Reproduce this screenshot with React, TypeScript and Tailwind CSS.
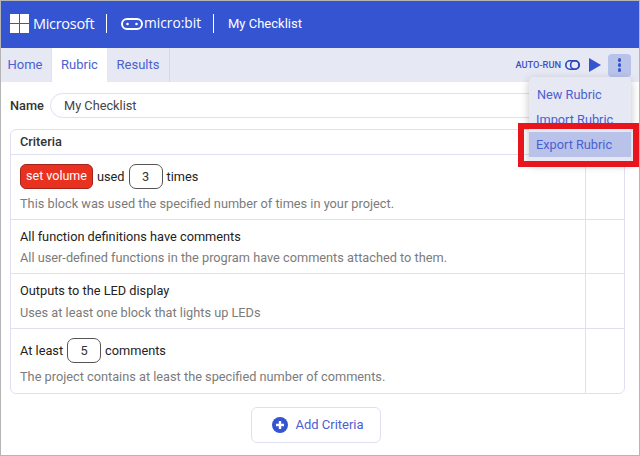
import React from "react";

function Row({ title, desc, h, titleClass, descClass }: { title: React.ReactNode; desc: string; h: string; titleClass?: string; descClass?: string }) {
  return (
    <div className={`flex border-t border-[#dfe1f3] ${h}`}>
      <div className="flex-1 min-w-0 pl-[9px] flex flex-col">
        <div className={`flex items-center text-[12.75px] text-[#222] ${titleClass ?? ""}`}>{title}</div>
        <div className={`text-[12.75px] leading-[18px] text-[#7b7b7b] ${descClass ?? ""}`}>{desc}</div>
      </div>
      <div className="w-[39px] border-l border-[#dfe1f3]" />
    </div>
  );
}

function NumBox({ n }: { n: string }) {
  return (
    <span className="mx-[4px] w-[34px] h-[25px] rounded-[7px] border border-[#555] bg-white flex items-center justify-center text-[12.75px] text-[#333]">{n}</span>
  );
}

export default function App() {
  return (
    <div className="relative w-[640px] h-[456px] overflow-hidden bg-white border border-[#b5b5b5] font-['Roboto',sans-serif]">
      <header className="h-[47px] bg-[#3454d1] flex items-center text-white pl-[9px] pb-[2px]">
        <svg width="19" height="19" viewBox="0 0 19 19" fill="#fff">
          <rect x="0" y="0" width="9" height="9" /><rect x="10" y="0" width="9" height="9" />
          <rect x="0" y="10" width="9" height="9" /><rect x="10" y="10" width="9" height="9" />
        </svg>
        <span className="ml-[4px] w-[61px] text-[14.5px] font-medium tracking-[-0.3px] font-['Open_Sans',sans-serif]">Microsoft</span>
        <div className="ml-[12px] w-px h-[19px] bg-white" />
        <svg className="ml-[14px]" width="22" height="12" viewBox="0 0 22 12" fill="none">
          <rect x="1" y="1" width="20" height="10" rx="5" stroke="#fff" strokeWidth="2" />
          <circle cx="6.5" cy="6" r="1.3" fill="#fff" /><circle cx="15.5" cy="6" r="1.3" fill="#fff" />
        </svg>
        <span className="ml-[1px] w-[57px] text-[13.75px] font-['Open_Sans',sans-serif]">micro:bit</span>
        <div className="ml-[12px] w-px h-[19px] bg-white" />
        <span className="ml-[14px] text-[13px]">My Checklist</span>
      </header>

      <nav className="h-[34px] bg-[#e6e8f3] flex items-stretch text-[13px] text-[#4b60d2]">
        <div className="w-[51px] pr-[2px] flex items-center justify-center border-r border-[#dfe1f3]">Home</div>
        <div className="w-[55px] bg-white flex items-center justify-center">Rubric</div>
        <div className="w-[63px] flex items-center justify-center border-r border-[#d5d8ec]">Results</div>
        <div className="ml-auto flex items-center pr-[8px]">
          <span className="text-[9.25px] font-medium text-[#3a50c4]">AUTO-RUN</span>
          <svg className="ml-[4px]" width="15" height="10" viewBox="0 0 15 10" fill="none" stroke="#2d45b8" strokeWidth="1.6">
            <rect x="0.8" y="0.8" width="13.4" height="8.4" rx="4.2" /><circle cx="9.8" cy="5" r="4.2" />
          </svg>
          <svg className="ml-[9px]" width="12" height="14" viewBox="0 0 12 14" fill="#3454d1"><path d="M0 0 L12 7 L0 14 Z" /></svg>
          <div className="ml-[7px] w-[23px] h-[23px] rounded-[4px] bg-[#b9c3ea] flex flex-col items-center justify-center gap-[1.5px]">
            <span className="w-[3.5px] h-[3.5px] rounded-full bg-[#3454d1]" />
            <span className="w-[3.5px] h-[3.5px] rounded-full bg-[#3454d1]" />
            <span className="w-[3.5px] h-[3.5px] rounded-full bg-[#3454d1]" />
          </div>
        </div>
      </nav>

      <main className="pl-[9px] pr-[14px]">
        <div className="flex items-center h-[47px]">
          <span className="text-[12.75px] font-medium text-[#333] w-[40px]">Name</span>
          <div className="flex-1 h-[25px] rounded-full border border-[#dfe1f3] flex items-center pl-[13px] text-[12.75px] text-[#444]">My Checklist</div>
        </div>
        <div className="rounded-[6px] border border-[#dfe1f3] h-[265px] overflow-hidden">
          <div className="flex h-[24px]">
            <div className="flex-1 pl-[9px] text-[12.75px] font-medium text-[#333] flex items-center">Criteria</div>
            <div className="w-[39px] border-l border-[#dfe1f3]" />
          </div>
          <Row h="h-[65px]" titleClass="mt-[9px]" descClass="mt-[6px]" title={<>
            <span className="h-[25px] w-[73px] rounded-[6px] bg-[#e8321f] border border-[#a3241a] text-white text-[12.5px] flex items-center justify-center mr-[4px]">set volume</span>
            <span>used</span><NumBox n="3" /><span>times</span></>}
            desc="This block was used the specified number of times in your project." />
          <Row h="h-[54px]" titleClass="mt-[8px] h-[18px]" descClass="mt-[3px]" title="All function definitions have comments"
            desc="All user-defined functions in the program have comments attached to them." />
          <Row h="h-[55px]" titleClass="mt-[8px] h-[18px]" descClass="mt-[4px]" title="Outputs to the LED display"
            desc="Uses at least one block that lights up LEDs" />
          <Row h="h-[66px]" titleClass="mt-[9px]" descClass="mt-[5px]" title={<>
            <span>At least</span><NumBox n="5" /><span>comments</span></>}
            desc="The project contains at least the specified number of comments." />
        </div>
        <div className="flex justify-center mt-[13px] pr-[4px]">
          <button className="w-[130px] h-[36px] pl-[5px] rounded-[6px] border border-[#dfe1f3] bg-white flex items-center justify-center text-[13px] text-[#4b60d2]">
            <svg width="16" height="16" viewBox="0 0 16 16">
              <circle cx="8" cy="8" r="8" fill="#3454d1" />
              <path d="M8 4v8M4 8h8" stroke="#fff" strokeWidth="2.4" />
            </svg>
            <span className="ml-[7px]">Add Criteria</span>
          </button>
        </div>
      </main>

      <div className="absolute left-[528px] top-[76px] w-[102px] h-[85px] rounded-[4px] bg-[#e6e8f3] shadow-[0_3px_8px_rgba(0,0,0,0.25)] text-[12.75px] text-[#4b60d2]">
        <div className="h-[25px] flex items-center pl-[8px] mt-[5px]">New Rubric</div>
        <div className="h-[25px] flex items-center pl-[7px]">Import Rubric</div>
        <div className="h-[25px] flex items-center pl-[7px] pt-[1px] bg-[#b9c3ea]">Export Rubric</div>
      </div>
      <div className="absolute left-[517px] top-[122px] w-[121px] h-[44px] border-[6px] border-[#e8151c]" />
    </div>
  );
}
